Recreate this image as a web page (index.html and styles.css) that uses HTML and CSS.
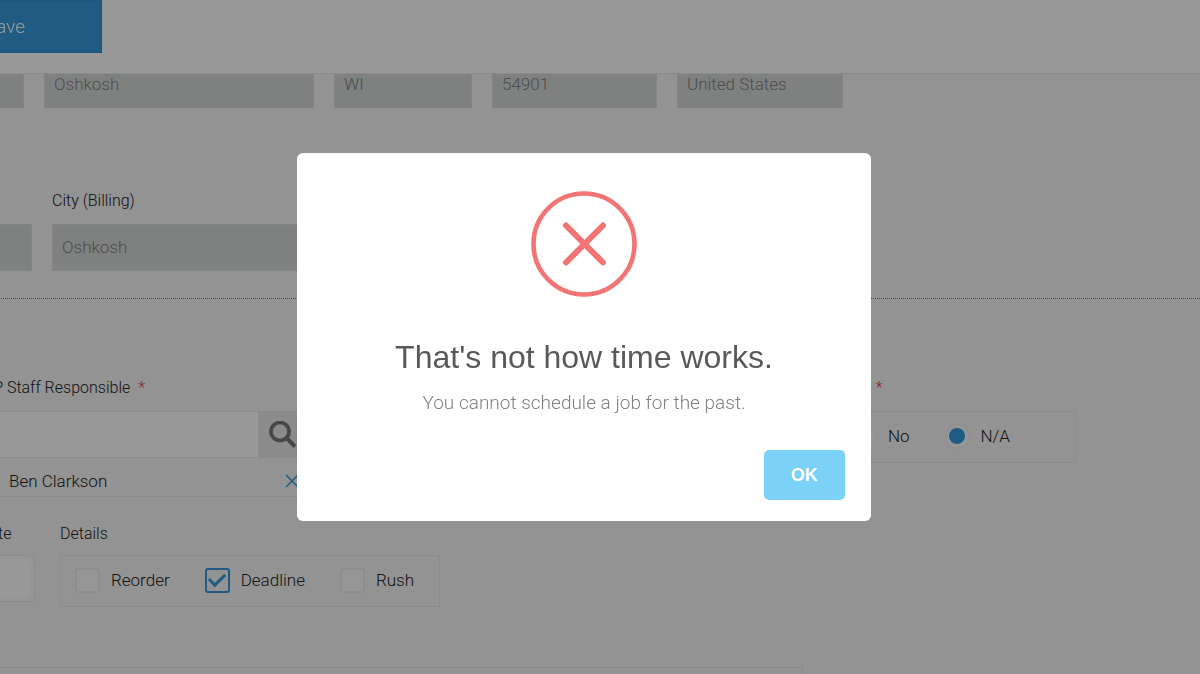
FILE: index.html
```html
<!DOCTYPE html>
<html lang="en">
<head>
    <meta charset="UTF-8">
    <meta name="viewport" content="width=device-width, initial-scale=1.0">
    <title>Schedule Job</title>
    <link rel="stylesheet" href="styles.css">
</head>
<body>
    <header class="toolbar">
        <button type="button" class="save-btn">Save</button>
    </header>

    <main class="page">
        <form>
            <!-- Shipping address -->
            <div class="row shipping">
                <input type="text" class="field" aria-label="Address (Shipping)" disabled>
                <input type="text" class="field" aria-label="City (Shipping)" value="Oshkosh" disabled>
                <input type="text" class="field" aria-label="State (Shipping)" value="WI" disabled>
                <input type="text" class="field" aria-label="Zip (Shipping)" value="54901" disabled>
                <input type="text" class="field" aria-label="Country (Shipping)" value="United States" disabled>
            </div>

            <!-- Billing address -->
            <div class="row billing">
                <input type="text" class="field" aria-label="Address (Billing)" disabled>
                <div class="form-group">
                    <label for="billing-city">City (Billing)</label>
                    <input type="text" class="field" id="billing-city" value="Oshkosh" disabled>
                </div>
            </div>

            <hr class="divider">

            <div class="job">
                <div class="job-row">
                    <div class="form-group staff">
                        <label for="staff">VIP Staff Responsible <span class="required">*</span></label>
                        <div class="search">
                            <input type="text" class="field" id="staff">
                            <button type="button" class="search-btn" aria-label="Search">
                                <svg width="28" height="28" viewBox="0 0 28 28" fill="none" stroke="currentColor">
                                    <circle cx="11" cy="10.5" r="9" stroke-width="3.6"/>
                                    <path d="M17.5 17l8.5 8.5" stroke-width="4"/>
                                </svg>
                            </button>
                        </div>
                        <div class="selected">
                            <span>Ben Clarkson</span>
                            <button type="button" class="remove-btn" aria-label="Remove">
                                <svg width="14" height="14" viewBox="0 0 14 14" fill="none" stroke="currentColor" stroke-width="1.6">
                                    <path d="M1 1l12 12M13 1L1 13"/>
                                </svg>
                            </button>
                        </div>
                    </div>

                    <div class="form-group proof" role="group" aria-labelledby="proof-label">
                        <span class="group-label" id="proof-label">Artwork Approved: <span class="required">*</span></span>
                        <div class="options">
                            <label><input type="radio" name="proof" value="yes"> Yes</label>
                            <label><input type="radio" name="proof" value="no"> No</label>
                            <label><input type="radio" name="proof" value="na" checked> N/A</label>
                        </div>
                    </div>
                </div>

                <div class="job-row details-row">
                    <div class="form-group date">
                        <label for="date">Date</label>
                        <input type="text" class="field" id="date">
                    </div>
                    <div class="form-group" role="group" aria-labelledby="details-label">
                        <span class="group-label" id="details-label">Details</span>
                        <div class="options">
                            <label><input type="checkbox" name="reorder"> Reorder</label>
                            <label><input type="checkbox" name="deadline" checked> Deadline</label>
                            <label><input type="checkbox" name="rush"> Rush</label>
                        </div>
                    </div>
                </div>
            </div>

            <div class="panel"></div>
        </form>
    </main>

    <div class="overlay">
        <div class="modal" role="alertdialog" aria-labelledby="modal-title" aria-describedby="modal-text">
            <svg class="modal-icon" width="106" height="106" viewBox="0 0 106 106" fill="none" stroke="currentColor">
                <circle cx="53" cy="53" r="50.5" stroke-width="4.6"/>
                <path d="M35 34.5l37 37M72 34.5l-37 37" stroke-width="6" stroke-linecap="round"/>
            </svg>
            <h2 id="modal-title">That's not how time works.</h2>
            <p id="modal-text">You cannot schedule a job for the past.</p>
            <div class="modal-footer">
                <button type="button" class="ok-btn">OK</button>
            </div>
        </div>
    </div>
</body>
</html>
```

FILE: styles.css
```css
* {
    box-sizing: border-box;
}

body {
    margin: 0;
    height: 100vh;
    overflow: hidden;
    background-color: #f5f5f5;
    color: #222;
    font-family: Roboto, "Liberation Sans", Arial, sans-serif;
    font-size: 17px;
    font-weight: 300;
    line-height: 20px;
}

input, button {
    font: inherit;
}

button {
    border: none;
    cursor: pointer;
}

/* Toolbar */
.toolbar {
    position: fixed;
    top: 0;
    left: 0;
    right: 0;
    z-index: 1;
    height: 74px;
    background: #fff;
    border-bottom: 1px solid #e6e6e6;
}

.save-btn {
    height: 53px;
    margin-left: -92px;
    padding: 0 76px;
    background: #3498db;
    border: 1px solid #2e8fd0;
    color: #fff;
    font-size: 19px;
}

/* Form */
.page {
    margin-left: -92px;
    padding-top: 61px;
}

.row {
    display: grid;
    gap: 20px;
    align-items: end;
    max-width: 935px;
}

.shipping {
    grid-template-columns: 116fr 270fr 138fr 165fr 166fr;
}

.billing {
    grid-template-columns: 124fr 322fr 449fr;
    margin-top: 82px;
}

.form-group > label,
.group-label {
    display: block;
    margin-bottom: 12px;
    font-size: 16px;
    line-height: 22px;
}

.field {
    display: block;
    width: 100%;
    min-width: 0;
    height: 47px;
    padding: 0 9px 2px;
    background: #fff;
    border: 1px solid #e8ecec;
    border-radius: 0;
}

.field:disabled {
    background: #d4d8d5;
    border-color: #dadedd;
    color: #808080;
}

.divider {
    margin: 27px 0 0;
    border: none;
    border-top: 1px dotted #777;
}

.required {
    margin-left: 4px;
    color: #e04848;
}

.job {
    max-width: 1168px;
    padding: 78px 0 60px 71px;
}

.job-row {
    display: flex;
    justify-content: space-between;
    align-items: flex-start;
}

.staff {
    width: 327px;
}

.search {
    display: flex;
}

.search-btn {
    flex: none;
    width: 47px;
    height: 47px;
    padding: 0 9px;
    background: #e8e8e8;
    border: 1px solid #e1e5e5;
    color: #777;
}

.search-btn svg,
.remove-btn svg {
    display: block;
}

.selected {
    display: flex;
    justify-content: space-between;
    align-items: center;
    height: 39px;
    padding: 8px 7px 0 30px;
    border-bottom: 1px solid #e8e8e8;
}

.remove-btn {
    padding: 0;
    background: none;
    color: #3498db;
}

.details-row {
    justify-content: flex-start;
    gap: 25px;
    margin-top: 26px;
}

.details-row .form-group > label,
.details-row .group-label {
    margin-bottom: 10px;
}

.date {
    width: 56px;
}

.date .field {
    box-shadow: inset 0 0 6px #eee;
}

.options {
    display: flex;
    gap: 35px;
    height: 52px;
    padding: 0 25px 2px 14px;
    border: 1px solid #e6e9e9;
}

.options label {
    display: flex;
    align-items: center;
    gap: 11px;
}

.proof .options {
    padding-right: 65px;
}

.options input {
    appearance: none;
    display: grid;
    place-content: center;
    width: 25px;
    height: 25px;
    margin: 0;
    background: #fafafa;
    border: 2px solid #ebebeb;
    border-radius: 3px;
}

.options input[type="radio"] {
    border-width: 1px;
    border-radius: 50%;
}

.options input[type="radio"]:checked::before {
    content: "";
    width: 16px;
    height: 16px;
    border-radius: 50%;
    background: #3498db;
}

.options input[type="checkbox"]:checked {
    background: #f5f5f5;
    border-color: #3498db;
}

.options input[type="checkbox"]:checked::before {
    content: "";
    width: 13px;
    height: 7px;
    border: solid #3498db;
    border-width: 0 0 3px 3px;
    transform: translateY(-2px) rotate(-45deg);
}

.panel {
    max-width: 895px;
    height: 60px;
    border: 1px solid #e4e8e8;
}

/* Alert */
.overlay {
    position: fixed;
    inset: 0;
    z-index: 10;
    display: flex;
    align-items: center;
    justify-content: center;
    padding-right: 32px;
    background: rgba(0, 0, 0, 0.4);
}

.modal {
    width: 574px;
    max-width: 100%;
    padding: 38px 26px 21px;
    background: #fff;
    border-radius: 6px;
    font-family: "Liberation Sans", Arial, sans-serif;
    text-align: center;
}

.modal-icon {
    display: block;
    margin: 0 auto;
    color: #f27474;
}

.modal h2 {
    margin: 40px 0 0;
    color: #595959;
    font-size: 32px;
    font-weight: 400;
    line-height: 40px;
}

.modal p {
    margin: 14px 0 0;
    color: #808080;
    font-family: Roboto, "Liberation Sans", Arial, sans-serif;
    font-size: 19px;
    line-height: 24px;
}

.modal-footer {
    display: flex;
    justify-content: flex-end;
    margin-top: 35px;
}

.ok-btn {
    width: 81px;
    height: 50px;
    background: #7cd1f9;
    border-radius: 5px;
    color: #fff;
    font-size: 18px;
    font-weight: 700;
}
```
